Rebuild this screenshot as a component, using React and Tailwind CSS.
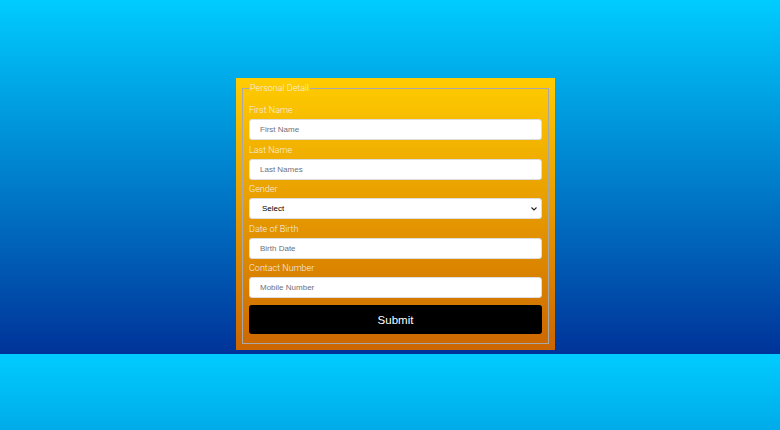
import React from 'react';

const fields = [
  { label: 'First Name', placeholder: 'First Name' },
  { label: 'Last Name', placeholder: 'Last Names' },
  { label: 'Gender', select: true },
  { label: 'Date of Birth', placeholder: 'Birth Date' },
  { label: 'Contact Number', placeholder: 'Mobile Number' },
];

const App = () => {
  return (
    <div
      className="h-[430px] w-full bg-[linear-gradient(to_bottom,#00ccff,#003399)] bg-[length:100%_354px] bg-repeat-y pl-[236px] pt-[78px]"
      style={{ fontFamily: '"Liberation Sans", Arial, sans-serif' }}
    >
      {/* Form card */}
      <div className="w-[319px] h-[272px] p-[6px] bg-[linear-gradient(to_bottom,#ffcc00,#cc6600)]">
        <fieldset className="h-full border border-[#a8a8a8] px-[6px] pb-[9px]">
          <legend className="ml-0 px-[1px] font-['Roboto',sans-serif] font-light text-[9px] leading-[9px] text-[#f4f0e6]">
            Personal Detail
          </legend>

          <div className="flex flex-col gap-[3.5px] mt-[11px]">
            {fields.map((f) => (
              <div key={f.label} className="flex flex-col">
                <label className="pt-[1px] font-['Roboto',sans-serif] font-light text-[9px] leading-[11px] text-[#f4f0e6]">{f.label}</label>
                {f.select ? (
                  <div className="relative mt-[3px] h-[21px]">
                    <select className="block h-[21px] w-full appearance-none rounded-[3px] border border-[#dddddd] bg-white pl-[12px] text-[8px] text-black outline-none">
                      <option>Select</option>
                      <option>Male</option>
                      <option>Female</option>
                    </select>
                    <svg className="pointer-events-none absolute right-[5px] top-[9px] h-[4px] w-[6px]" viewBox="0 0 6 4">
                      <path d="M0.5 0.5 L3 3 L5.5 0.5" fill="none" stroke="#222" strokeWidth="1.1" />
                    </svg>
                  </div>
                ) : (
                  <input
                    type="text"
                    placeholder={f.placeholder}
                    className="mt-[3px] h-[21px] w-full rounded-[3px] border border-[#dddddd] bg-white px-[10px] text-[8px] text-black outline-none placeholder:text-[#70707a]"
                  />
                )}
              </div>
            ))}
          </div>

          <button
            type="submit"
            className="mt-[7px] h-[29px] w-full rounded-[3px] bg-black pt-[3px] text-[11.5px] text-white"
          >
            Submit
          </button>
        </fieldset>
      </div>
    </div>
  );
};

export default App;
